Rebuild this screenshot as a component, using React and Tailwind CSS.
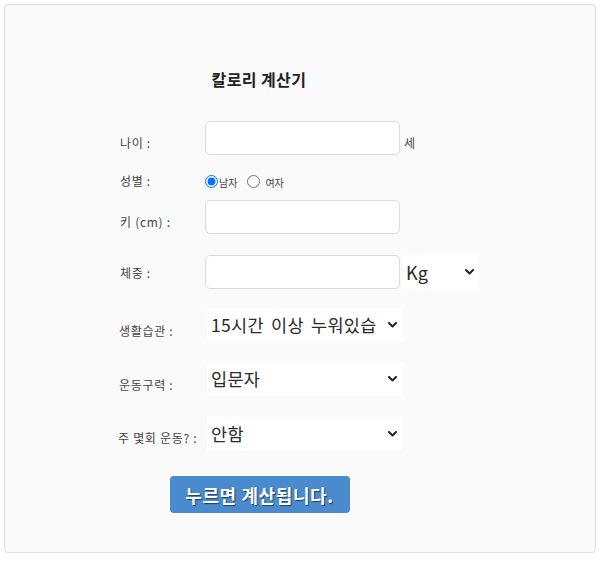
import React from "react";

const font = { fontFamily: '"Noto Sans CJK KR", "Noto Sans", sans-serif' };

function Chevron() {
  return (
    <svg width="9" height="6" viewBox="0 0 9 6" className="shrink-0">
      <polyline points="1,1 4.5,4.5 8,1" fill="none" stroke="#222" strokeWidth="2" strokeLinecap="round" strokeLinejoin="round" />
    </svg>
  );
}

function FakeSelect({ value, className }) {
  return (
    <div className={"h-[34px] bg-white flex items-center justify-between pl-[4px] pr-[5px] text-[#2a2a2a] " + className}>
      <span className="whitespace-nowrap leading-none">{value}</span>
      <Chevron />
    </div>
  );
}

function Label({ children, extra = "" }) {
  return <div className={"w-[87px] shrink-0 text-[12px] text-[#444] tracking-[0.7px] whitespace-nowrap " + extra}>{children}</div>;
}

export default function App() {
  return (
    <div style={font} className="w-[600px] h-[561px] bg-white">
      <div className="absolute left-[4px] top-[4px] w-[592px] h-[549px] border border-[#dedede] rounded-[4px] bg-[#fafafa]">
        <div className="pl-[113px] pt-[62px]">
          <div className="w-[282px] text-center text-[16px] font-bold text-[#222] leading-[24px] tracking-[0.4px]">칼로리 계산기</div>

          <div className="flex items-center mt-[30px]">
            <Label extra="mt-[9px] pl-[2px]">나이 :</Label>
            <div className="w-[195px] h-[34px] bg-white border border-[#dcdcdc] rounded-[5px]" />
            <span className="ml-[4px] mt-[9px] text-[12px] text-[#444]">세</span>
          </div>

          <div className="flex items-center mt-[16px] h-[20px]">
            <Label extra="mt-[-1px] pl-[2px]">성별 :</Label>
            <input type="radio" name="g" defaultChecked className="m-0 w-[13px] h-[13px]" />
            <span className="text-[10px] text-[#444] ml-[1px] mt-[2px]">남자</span>
            <input type="radio" name="g" className="m-0 ml-[10px] w-[13px] h-[13px]" />
            <span className="text-[10px] text-[#444] ml-[5px] mt-[2px]">여자</span>
          </div>

          <div className="flex items-center mt-[9px]">
            <Label extra="mt-[9px] pl-[2px]">키 (cm) :</Label>
            <div className="w-[195px] h-[34px] bg-white border border-[#dcdcdc] rounded-[5px]" />
          </div>

          <div className="flex items-center mt-[21px]">
            <Label extra="mt-[2px] pl-[2px]">체중 :</Label>
            <div className="w-[195px] h-[34px] bg-white border border-[#dcdcdc] rounded-[5px]" />
            <FakeSelect value="Kg" className="ml-[2px] w-[77px] text-[18px]" />
          </div>

          <div className="flex items-center mt-[19px]">
            <Label extra="mt-[12px] pl-[1px]">생활습관 :</Label>
            <FakeSelect value="15시간 이상 누워있습" className="ml-[2px] w-[195px] text-[17.5px] tracking-[0.3px] [word-spacing:3px]" />
          </div>

          <div className="flex items-center mt-[20px]">
            <Label extra="mt-[12px] pl-[1px]">운동구력 :</Label>
            <FakeSelect value="입문자" className="ml-[2px] w-[195px] text-[17.5px] tracking-[0.3px]" />
          </div>

          <div className="flex items-center mt-[21px]">
            <Label extra="mt-[8px] tracking-[0.5px]">주 몇회 운동? :</Label>
            <FakeSelect value="안함" className="ml-[2px] w-[195px] text-[17.5px] tracking-[0.3px]" />
          </div>

          <div className="w-[282px] flex justify-center mt-[25px]">
            <button className="w-[180px] h-[37px] bg-[#4a8bd0] rounded-[4px] text-white font-bold text-[18px] leading-none tracking-[0.6px] [text-shadow:1px_1px_1px_rgba(0,0,0,0.55)] ml-[1px]">
              누르면 계산됩니다.
            </button>
          </div>
        </div>
      </div>
    </div>
  );
}
